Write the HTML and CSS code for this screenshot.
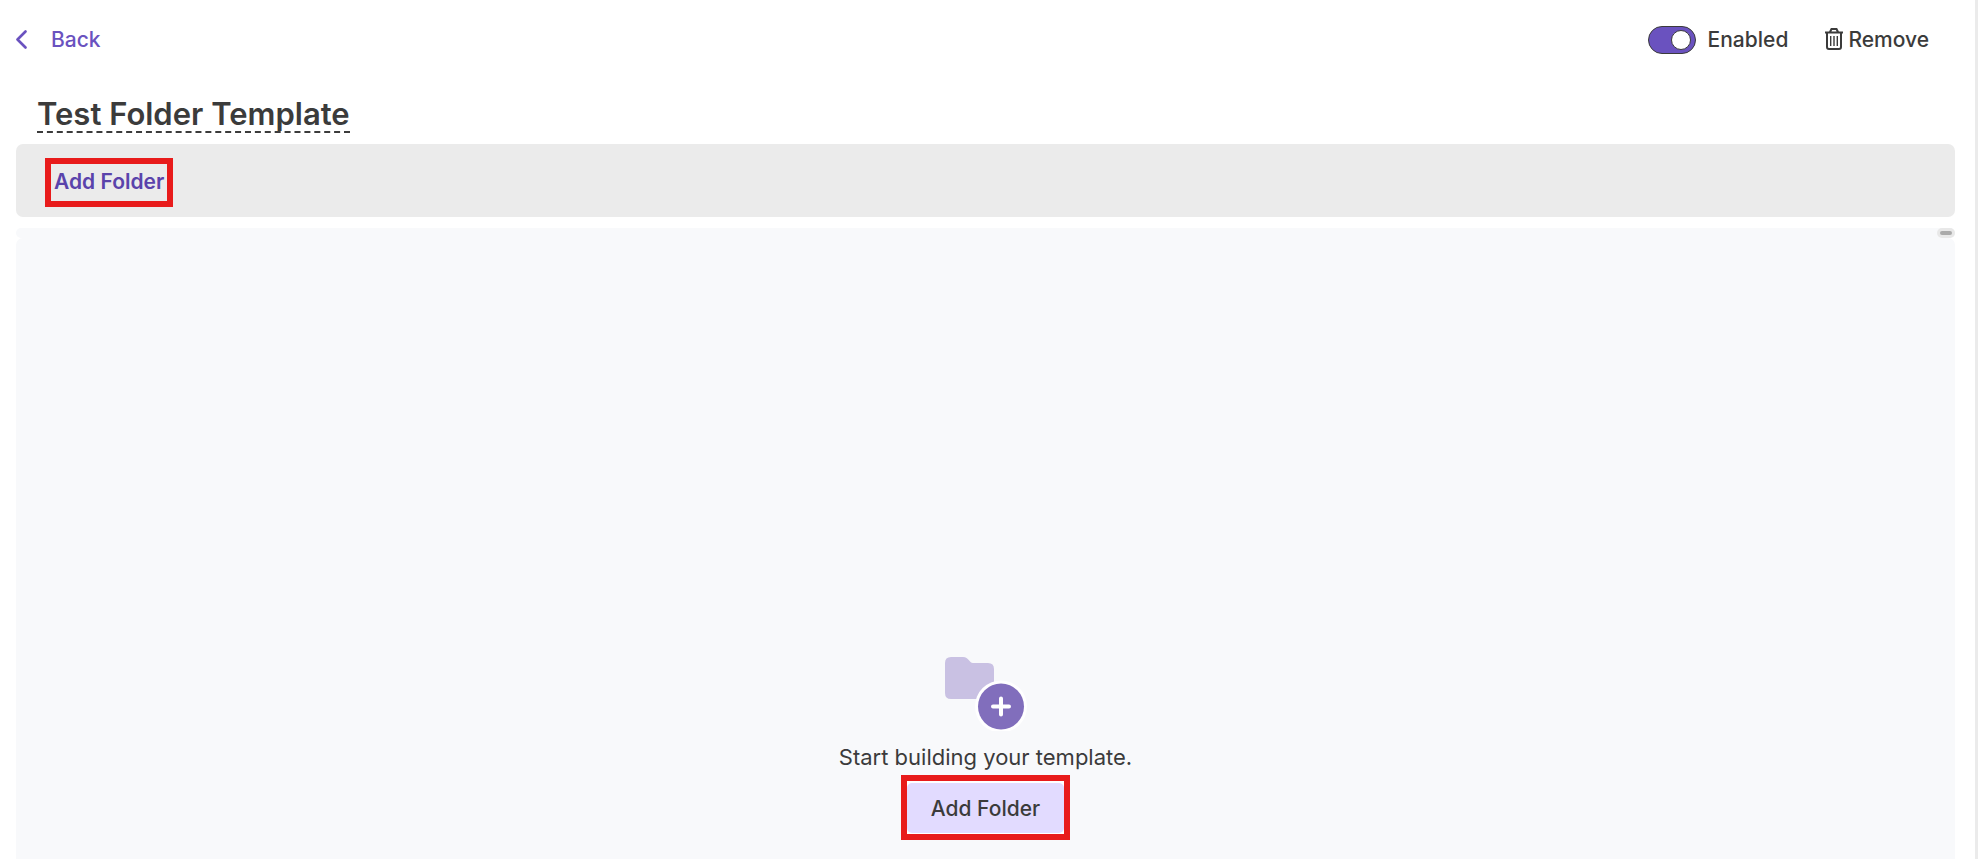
FILE: index.html
```html
<!DOCTYPE html>
<html lang="en">
<head>
  <meta charset="UTF-8">
  <meta name="viewport" content="width=device-width, initial-scale=1.0">
  <title>Test Folder Template</title>
  <link rel="stylesheet" href="styles.css">
</head>
<body>
  <header class="topbar">
    <a class="back" href="#">
      <svg width="11" height="20" viewBox="0 0 11 20" fill="none" stroke="currentColor" stroke-width="2.6" stroke-linecap="round" stroke-linejoin="round" aria-hidden="true">
        <path d="M9.5 1.5 L1.5 9.5 L9.5 17.5"/>
      </svg>
      <span>Back</span>
    </a>
    <div class="actions">
      <label class="switch">
        <input type="checkbox" role="switch" checked>
        <span>Enabled</span>
      </label>
      <button class="remove" type="button">
        <svg width="20" height="24" viewBox="0 0 20 24" fill="none" stroke="currentColor" stroke-width="2" aria-hidden="true">
          <path d="M1 4.5 H19 M6 4 L7.5 1 H12.5 L14 4"/>
          <path d="M3 5 V19 Q3 21 5 21 H15 Q17 21 17 19 V5"/>
          <path stroke-width="1.4" d="M6.7 8 V18 M10 8 V18 M13.3 8 V18"/>
        </svg>
        <span>Remove</span>
      </button>
    </div>
  </header>

  <h1 class="title">Test Folder Template</h1>

  <div class="toolbar">
    <div class="highlight">
      <button class="toolbar-add" type="button">Add Folder</button>
    </div>
  </div>

  <main class="builder">
    <div class="builder-head">
      <button class="collapse" type="button" aria-label="Collapse"></button>
    </div>
    <section class="canvas">
      <svg class="folder-icon" width="82" height="76" viewBox="0 0 82 76" aria-hidden="true">
        <path fill="#c9c1e3" d="M6 2 H18 C24 2 24 8 28 8 H43 Q49 8 49 14 V38 Q49 44 43 44 H6 Q0 44 0 38 V8 Q0 2 6 2 Z"/>
        <circle cx="56" cy="51.5" r="26" fill="#fff"/>
        <circle cx="56" cy="51.5" r="23" fill="#816ebc"/>
        <path d="M56 43.5 V59.5 M48 51.5 H64" stroke="#fff" stroke-width="4" stroke-linecap="round"/>
      </svg>
      <p class="hint">Start building your template.</p>
      <div class="highlight">
        <button class="canvas-add" type="button">Add Folder</button>
      </div>
    </section>
  </main>
</body>
</html>
```

FILE: styles.css
```css
* {
  box-sizing: border-box;
}
body {
  margin: 0;
  min-height: 100vh;
  display: flex;
  flex-direction: column;
  padding: 24px 20px 0 16px;
  border-right: 3px solid #ebebeb;
  background-color: #fff;
  color: #3b3b3b;
  font-family: Inter, "Work Sans", sans-serif;
  font-size: 21px;
  line-height: 32px;
}
button {
  padding: 0;
  border: none;
  background: none;
  color: inherit;
  font: inherit;
  cursor: pointer;
}
.topbar {
  display: flex;
  justify-content: space-between;
  align-items: center;
  padding-right: 26px;
  font-weight: 500;
}
.back {
  display: flex;
  align-items: center;
  gap: 24px;
  color: #6a52bf;
  text-decoration: none;
}
.actions {
  display: flex;
  align-items: center;
  gap: 36px;
}
.switch {
  display: flex;
  align-items: center;
  gap: 12px;
}
.switch input {
  appearance: none;
  display: flex;
  align-items: center;
  width: 48px;
  height: 28px;
  margin: 0;
  padding: 0 4px;
  border: 1px solid #3b3b3b;
  border-radius: 14px;
  background-color: #6a52bf;
}
.switch input::before {
  content: "";
  width: 18px;
  height: 18px;
  border: 1px solid #3b3b3b;
  border-radius: 50%;
  background-color: #fff;
}
.switch input:checked {
  justify-content: flex-end;
}
.remove {
  display: flex;
  align-items: center;
  gap: 4px;
}
.title {
  align-self: flex-start;
  margin: 40px 0 11px 21px;
  border-bottom: 2px dashed #3b3b3b;
  font-size: 31px;
  font-weight: 600;
  line-height: 35px;
}
.toolbar {
  display: flex;
  padding: 14px 29px 10px;
  border-radius: 7px;
  background-color: #ebebeb;
}
.highlight {
  border: 6px solid #e81b1b;
}
.toolbar-add {
  display: block;
  padding: 2px 3px 3px;
  color: #5a43ab;
  font-weight: 600;
}
.builder {
  flex: 1;
  display: flex;
  flex-direction: column;
  margin-top: 11px;
}
.builder-head {
  display: flex;
  justify-content: flex-end;
  border-radius: 5px;
  background-color: #f8f9fb;
}
.collapse {
  display: flex;
  padding: 3px;
  border-radius: 5px;
  background-color: #e8e8e8;
}
.collapse::before {
  content: "";
  width: 12px;
  height: 4px;
  border-radius: 2px;
  background-color: #aaa;
}
.canvas {
  flex: 1;
  display: flex;
  flex-direction: column;
  align-items: center;
  justify-content: flex-end;
  padding-bottom: 19px;
  border-radius: 7px 7px 0 0;
  background-color: #f8f9fb;
}
.hint {
  margin: 10px 0 2px;
  font-size: 22px;
}
.canvas .highlight {
  background-color: #fff;
  padding: 2px 0 1px;
}
.canvas-add {
  display: block;
  padding: 10px 24px 8px;
  border-radius: 5px;
  background-color: #e2dbff;
  font-weight: 500;
}
```
